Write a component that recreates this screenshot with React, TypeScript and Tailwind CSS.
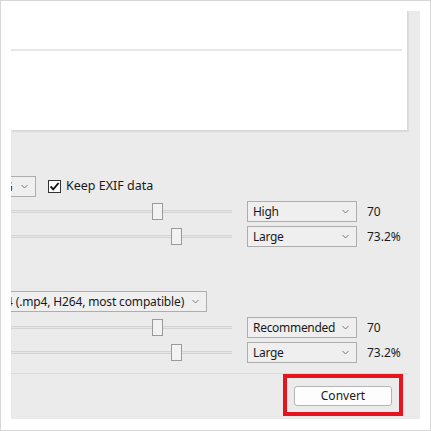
import React from "react";

const Chevron = () => (
  <svg width="7" height="5" viewBox="0 0 7 5" className="shrink-0">
    <path d="M0.5 1 L3.5 4 L6.5 1" fill="none" stroke="#7a7a7a" strokeWidth="1" />
  </svg>
);

const Select = ({ label, className = "" }: { label: string; className?: string }) => (
  <div
    className={`flex items-center justify-between h-[21px] border border-[#adadad] bg-[#efefef] pl-[5px] pr-[7px] text-[12px] tracking-[-0.3px] text-[#1a1a1a] ${className}`}
  >
    <span className="whitespace-nowrap leading-none">{label}</span>
    <Chevron />
  </div>
);

const Slider = ({ thumb }: { thumb: number }) => (
  <div className="relative w-[221px] h-[21px] flex items-center">
    <div className="w-full h-[3px] border-y border-[#d4d4d4] bg-[#e6e6e6]" />
    <div
      className="absolute top-[2px] w-[11px] h-[17px] border border-[#9a9a9a] bg-[#f2f2f2]"
      style={{ left: thumb }}
    />
  </div>
);

const SliderRow = ({ thumb, value, label }: { thumb: number; value: string; label: string }) => (
  <div className="flex items-center">
    <Slider thumb={thumb} />
    <Select label={label} className="ml-[15px] w-[110px]" />
    <span className="ml-[10px] text-[12px] text-[#1a1a1a] leading-none">{value}</span>
  </div>
);

export default function App() {
  return (
    <div
      className="w-[431px] h-[431px] border border-[#d6d6d6] bg-white pl-[10px] pt-[10px]"
      style={{ fontFamily: '"Noto Sans", "Liberation Sans", sans-serif' }}
    >
      <div className="w-[409px] h-[408px] bg-[#ecebec] overflow-hidden flex flex-col">
        <div className="w-[397px] h-[120px] bg-white border-r border-b border-[#d9d9d9] shadow-[1px_1px_1px_rgba(0,0,0,0.06)] pt-[38px] shrink-0">
          <div className="w-[391px] h-[2px] bg-[#e6e6e6]" />
        </div>

        <div className="mt-[45px] flex items-center">
          <div className="flex items-center justify-between h-[21px] w-[25px] border border-l-0 border-[#adadad] bg-[#efefef] pr-[7px] overflow-hidden text-[12px] text-[#1a1a1a]">
            <span className="ml-[-7px] leading-none">G</span>
            <Chevron />
          </div>
          <div className="ml-[12px] w-[13px] h-[13px] border border-[#333] bg-white flex items-center justify-center">
            <svg width="11" height="11" viewBox="0 0 11 11">
              <path d="M1.6 5.4 L4.2 8.3 L9.6 2" fill="none" stroke="#111" strokeWidth="1.9" />
            </svg>
          </div>
          <span className="ml-[5px] text-[12.5px] text-[#1a1a1a] leading-none">Keep EXIF data</span>
        </div>

        <div className="mt-[4px]">
          <SliderRow thumb={141} value="70" label="High" />
        </div>
        <div className="mt-[4px]">
          <SliderRow thumb={160} value="73.2%" label="Large" />
        </div>

        <div className="mt-[44px] flex">
          <div className="flex items-center justify-between h-[21px] w-[196px] border border-l-0 border-[#adadad] bg-[#efefef] pr-[7px] overflow-hidden text-[12px] tracking-[-0.15px] text-[#1a1a1a]">
            <span className="ml-[-5px] whitespace-nowrap leading-none">4 (.mp4, H264, most compatible)</span>
            <Chevron />
          </div>
        </div>

        <div className="mt-[5px]">
          <SliderRow thumb={141} value="70" label="Recommended" />
        </div>
        <div className="mt-[4px]">
          <SliderRow thumb={160} value="73.2%" label="Large" />
        </div>

        <div className="mt-[10px] w-[397px] h-[1px] bg-[#dadada]" />

        <div className="flex justify-end pr-[17px]">
          <div className="border-[4px] border-[#e5141f] pl-[7px] pr-[7px] pt-[8px] pb-[6px]">
            <button className="w-[98px] h-[20px] rounded-[3px] border border-[#b5b5b5] bg-[#fdfdfd] text-[12px] text-[#1a1a1a] leading-none flex items-center justify-center">
              Convert
            </button>
          </div>
        </div>
      </div>
    </div>
  );
}
